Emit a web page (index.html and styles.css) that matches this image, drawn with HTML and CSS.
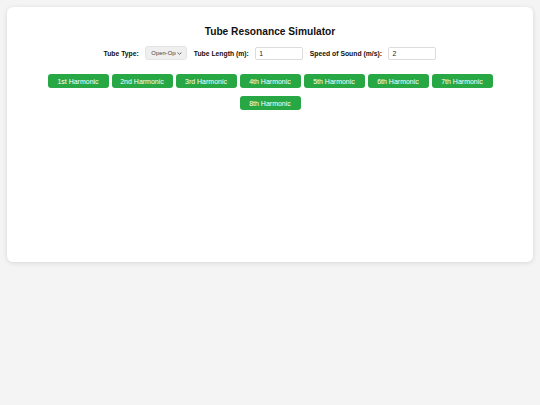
FILE: index.html
```html
<!DOCTYPE html>
<html>
<head>
<meta charset="utf-8">
<link rel="stylesheet" href="styles.css">
</head>
<body>
<div class="card">
  <h1 class="title">Tube Resonance Simulator</h1>
  <div class="controls">
    <label class="lbl">Tube Type:</label>
    <span class="selwrap">
      <select class="sel"><option>Open-Open</option></select>
      <svg class="chev" width="5" height="3" viewBox="0 0 5 3"><path d="M0.6 0.6 L2.5 2.3 L4.4 0.6" fill="none" stroke="#444" stroke-width="0.8"/></svg>
    </span>
    <label class="lbl">Tube Length (m):</label>
    <input class="inp" type="text" value="1">
    <label class="lbl">Speed of Sound (m/s):</label>
    <input class="inp" type="text" value="2">
  </div>
  <div class="buttons">
    <button class="btn">1st Harmonic</button>
    <button class="btn">2nd Harmonic</button>
    <button class="btn">3rd Harmonic</button>
    <button class="btn">4th Harmonic</button>
    <button class="btn">5th Harmonic</button>
    <button class="btn">6th Harmonic</button>
    <button class="btn">7th Harmonic</button>
    <button class="btn">8th Harmonic</button>
  </div>
  <div class="canvas"></div>
</div>
</body>
</html>
```

FILE: styles.css
```css
html, body {
  margin: 0;
  padding: 0;
  background: #f4f4f4;
  font-family: "Liberation Sans", Arial, sans-serif;
}
body {
  padding: 7px;
}
.card {
  width: 526px;
  height: 255px;
  box-sizing: border-box;
  background: #ffffff;
  border-radius: 6px;
  box-shadow: 0 1px 5px rgba(0,0,0,0.12);
  padding: 19px 20px 10px;
}
.title {
  margin: 0;
  text-align: center;
  font-size: 10.2px;
  font-weight: bold;
  color: #111;
  line-height: 12px;
}
.controls {
  display: flex;
  justify-content: center;
  align-items: center;
  margin-top: 8px;
  gap: 6.5px;
}
.lbl {
  font-size: 6.8px;
  font-weight: bold;
  color: #111;
}
.selwrap {
  position: relative;
  display: inline-block;
  width: 42px;
  height: 14px;
}
.sel {
  -webkit-appearance: none;
  appearance: none;
  font-family: inherit;
  font-size: 5.9px;
  width: 42px;
  height: 14px;
  box-sizing: border-box;
  padding: 0 10px 0 5px;
  background: #efefef;
  border: 1px solid #e4e4e4;
  border-radius: 3px;
  color: #444;
  display: block;
}
.chev {
  position: absolute;
  right: 5px;
  top: 6px;
  pointer-events: none;
}
.inp {
  font-family: inherit;
  font-size: 6.8px;
  width: 48px;
  height: 13px;
  box-sizing: border-box;
  padding: 0 3px;
  border: 1px solid #dcdcdc;
  border-radius: 2px;
  color: #222;
}
.buttons {
  display: flex;
  flex-wrap: wrap;
  justify-content: center;
  gap: 8px 3px;
  margin-top: 14px;
}
.btn {
  font-family: inherit;
  font-size: 7px;
  color: #fff;
  background: #28a745;
  border: none;
  border-radius: 3px;
  width: 61px;
  height: 14px;
  padding: 0;
}
.canvas {
  height: 140px;
}
```
